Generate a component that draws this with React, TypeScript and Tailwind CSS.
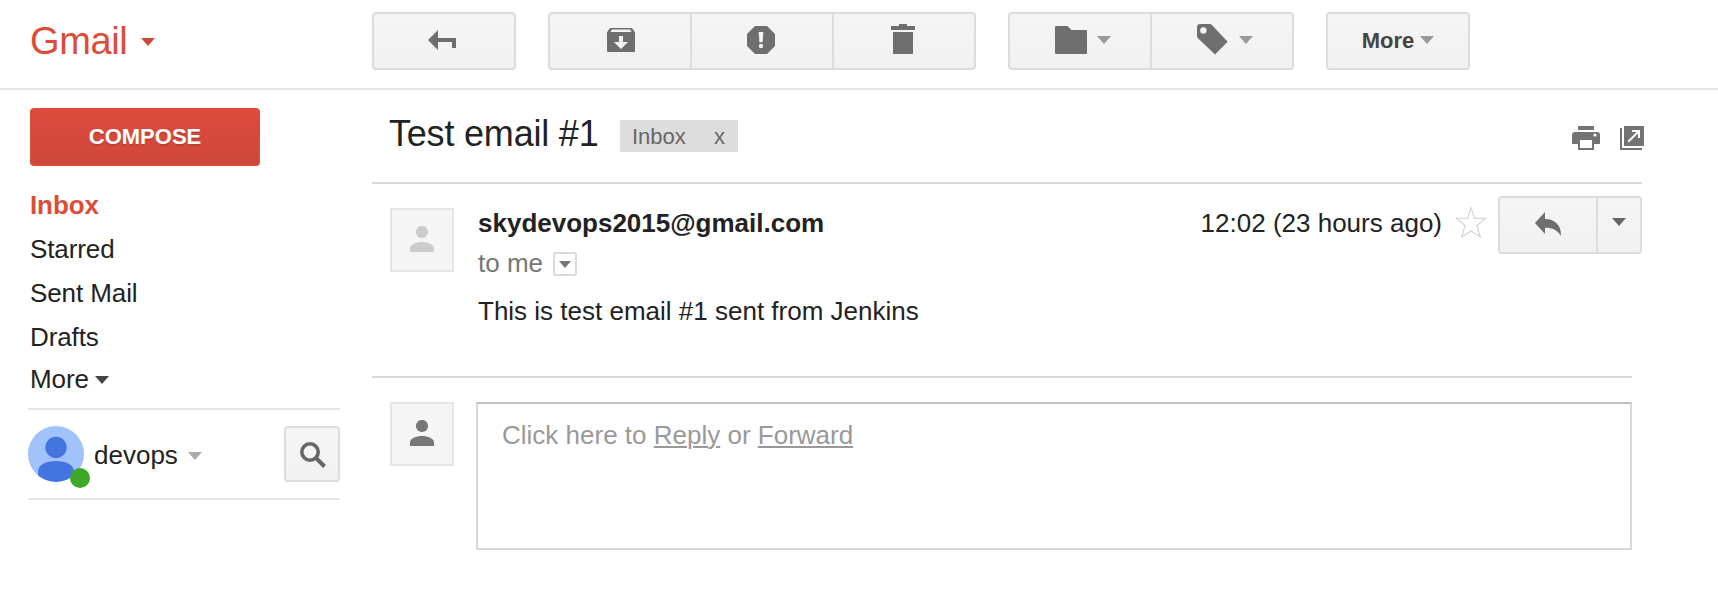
import type { ReactNode } from "react";

function Caret({ className = "" }: { className?: string }) {
  return (
    <svg width="14" height="8" viewBox="0 0 14 8" className={`shrink-0 ${className}`}>
      <path d="M0 0H14L7 8Z" fill="currentColor" />
    </svg>
  );
}

function BackIcon() {
  return (
    <svg width="28" height="20" viewBox="0 0 28 20" className="-mt-0.5 mr-1">
      <path d="M10 0V8H28V18H24V12H10V20L0 10Z" fill="currentColor" />
    </svg>
  );
}

function ArchiveIcon() {
  return (
    <svg width="28" height="24" viewBox="0 0 28 24" className="-mt-0.5 ml-0.5">
      <path
        fillRule="evenodd"
        fill="currentColor"
        d="M4 0H24Q25 0 25.6 .8L28 4.2V23Q28 24 27 24H1Q0 24 0 23V4.2L2.4 .8Q3 0 4 0ZM5 1.6L3.4 4H24.6L23 1.6ZM12 8V14H7L14 21L21 14H16V8Z"
      />
    </svg>
  );
}

function SpamIcon() {
  return (
    <svg width="28" height="28" viewBox="0 0 28 28" className="-mt-0.5 mr-0.5">
      <path d="M8 0H20L28 8V20L20 28H8L0 20V8Z" fill="currentColor" />
      <path d="M11.7 6H16.3L15.6 16.3H12.4Z" fill="#f4f4f4" />
      <circle cx="14" cy="20" r="2.2" fill="#f4f4f4" />
    </svg>
  );
}

function TrashIcon() {
  return (
    <svg width="24" height="30" viewBox="0 0 24 30" className="-mt-1 mr-0.5">
      <path d="M8 0H16V2H24V6H0V2H8ZM2 8H22V30H2Z" fill="currentColor" />
    </svg>
  );
}

function FolderIcon() {
  return (
    <svg width="32" height="28" viewBox="0 0 32 28" className="-mt-0.5">
      <path d="M1 0H12.5L16.5 4H31Q32 4 32 5V27Q32 28 31 28H1Q0 28 0 27V1Q0 0 1 0Z" fill="currentColor" />
    </svg>
  );
}

function TagIcon() {
  return (
    <svg width="31" height="31" viewBox="0 0 31 31" className="-mt-[3px]">
      <path
        fillRule="evenodd"
        fill="currentColor"
        d="M3 0H12.5Q14 0 15 1L30.6 17.8L18 30.6L1 14.3Q0 13.3 0 12V3Q0 0 3 0ZM6.4 3.3A3.2 3.2 0 1 0 6.4 9.7A3.2 3.2 0 1 0 6.4 3.3Z"
      />
    </svg>
  );
}

function PrintIcon() {
  return (
    <svg width="28" height="24" viewBox="0 0 28 24">
      <path
        fillRule="evenodd"
        fill="currentColor"
        d="M6 0H22V4H6ZM3 6H25Q28 6 28 9V18H22V24H6V18H0V9Q0 6 3 6ZM8 14V22H20V14ZM23 7.4A1.6 1.6 0 1 0 23 10.6A1.6 1.6 0 1 0 23 7.4Z"
      />
    </svg>
  );
}

function PopOutIcon() {
  return (
    <svg width="24" height="24" viewBox="0 0 24 24">
      <path d="M4 0H24V20H4ZM0 2H2V22H22V24H0Z" fill="currentColor" />
      <path d="M12 5H19V12M19 5L8.2 15.8" fill="none" stroke="#fff" strokeWidth="2" />
    </svg>
  );
}

function StarIcon() {
  return (
    <svg width="32" height="32" viewBox="0 0 32 32">
      <path
        d="M16 1.8L19.4 12.3H30.6L21.9 19.5L25.4 31L16 25L6.6 31L10.1 19.5L1.4 12.3H12.6Z"
        fill="none"
        stroke="#d0d0d0"
        strokeWidth="1.1"
      />
    </svg>
  );
}

function ReplyIcon() {
  return (
    <svg width="26" height="24" viewBox="0 0 26 24" className="-mt-0.5">
      <path d="M10 0V7C20 7 26.5 13.5 25.9 23.7C22 17.5 17 15.5 10 15.7V22L0 11Z" fill="currentColor" />
    </svg>
  );
}

function SearchIcon() {
  return (
    <svg width="26" height="26" viewBox="0 0 26 26" className="mt-0.5 ml-0.5">
      <circle cx="10" cy="10" r="8.2" fill="none" stroke="currentColor" strokeWidth="3.6" />
      <path d="M16.5 16.5L24.5 24.5" stroke="currentColor" strokeWidth="4" />
    </svg>
  );
}

function PersonTile({ className = "" }: { className?: string }) {
  return (
    <div
      className={`flex size-16 shrink-0 items-center justify-center border-2 border-[#e5e5e5] bg-[#f5f5f5] ${className}`}
    >
      <svg width="24" height="26" viewBox="0 0 24 26" className="-mt-0.5">
        <circle cx="12" cy="6" r="6.1" fill="currentColor" />
        <path d="M0 26V22.5C0 18.5 6 16 12 16S24 18.5 24 22.5V26Z" fill="currentColor" />
      </svg>
    </div>
  );
}

const face = "border-2 border-[#dcdcdc] bg-linear-to-b from-[#f5f5f5] to-[#f1f1f1]";

function ButtonGroup({ items }: { items: ReactNode[] }) {
  return (
    <div className={`flex h-[58px] divide-x-2 divide-[#dcdcdc] rounded ${face}`}>
      {items.map((item, i) => (
        <button key={i} className="box-content flex w-[140px] items-center justify-center text-[#6e6e6e]">
          {item}
        </button>
      ))}
    </div>
  );
}

function Header() {
  return (
    <header className="flex h-[90px] items-start border-b-2 border-[#e5e5e5]">
      <div className="flex w-[372px] items-center pl-[30px] text-[#dd4b39]">
        <span className="w-[111px] text-[38px] leading-[82px] tracking-[-0.4px]">Gmail</span>
        <Caret className="mt-0.5 text-[#d14836]" />
      </div>
      <div className="flex gap-8 pt-3">
        <ButtonGroup items={[<BackIcon />]} />
        <ButtonGroup items={[<ArchiveIcon />, <SpamIcon />, <TrashIcon />]} />
        <ButtonGroup
          items={[
            <span className="flex items-center gap-2.5 pl-1.5">
              <FolderIcon />
              <Caret className="-mt-0.5 text-[#999]" />
            </span>,
            <span className="flex items-center gap-[11px] pl-1.5">
              <TagIcon />
              <Caret className="-mt-0.5 text-[#999]" />
            </span>,
          ]}
        />
        <ButtonGroup
          items={[
            <span className="flex items-center gap-1.5 text-[22px] leading-[54px] font-bold text-[#444]">
              More
              <Caret className="-mt-0.5 text-[#999]" />
            </span>,
          ]}
        />
      </div>
    </header>
  );
}

function Sidebar() {
  return (
    <aside className="w-[372px] shrink-0 pt-[18px] text-[26px] text-[#222]">
      <button className="ml-[30px] block h-[58px] w-[230px] rounded border-2 border-[#d94b3a] border-t-[#dc4c3c] bg-linear-to-b from-[#dd4b3e] to-[#ce473a] pb-px text-[22px] leading-[54px] font-bold text-white [text-shadow:0_2px_rgba(0,0,0,0.12)]">
        COMPOSE
      </button>
      <nav className="mt-[17px] flex flex-col pl-[30px] leading-[44px] tracking-[-0.1px]">
        <a className="font-bold text-[#dd4b39]">Inbox</a>
        <a>Starred</a>
        <a>Sent Mail</a>
        <a>Drafts</a>
        <a className="flex items-center gap-1.5 leading-10">
          More
          <Caret className="mt-0.5 text-[#444]" />
        </a>
      </nav>
      <div className="mt-[9px] ml-7 flex h-[92px] w-[312px] items-center border-y-2 border-[#e5e5e5]">
        <div className="relative size-14">
          <svg width="56" height="56" viewBox="0 0 56 56">
            <clipPath id="avatar">
              <circle cx="28" cy="28" r="28" />
            </clipPath>
            <g clipPath="url(#avatar)">
              <rect width="56" height="56" fill="#a1c2fa" />
              <circle cx="28" cy="21.4" r="10.7" fill="#4374e0" />
              <path d="M10 56V46C10 38.5 18 35 28 35S46 38.5 46 46V56Z" fill="#4374e0" />
            </g>
          </svg>
          <span className="absolute top-[42px] left-[42px] size-5 rounded-full bg-[#3da828]" />
        </div>
        <span className="ml-2.5 w-[94px] pt-0.5 leading-[56px]">devops</span>
        <Caret className="mt-1 text-[#aaa]" />
        <button className={`ml-auto flex size-14 items-center justify-center rounded text-[#666] ${face}`}>
          <SearchIcon />
        </button>
      </div>
    </aside>
  );
}

function Conversation() {
  return (
    <main className="w-[1272px] text-[26px] text-[#222]">
      <div className="flex h-[92px] items-start pl-[17px]">
        <h1 className="w-[231px] text-[36px] leading-[87px] tracking-[-0.2px] whitespace-nowrap">Test email #1</h1>
        <div className="mt-[30px] flex h-8 w-[118px] justify-between bg-[#ddd] pr-[13px] pl-3 text-[22px] leading-[33px] text-[#666]">
          <span>Inbox</span>
          <span>x</span>
        </div>
        <div className="mt-9 ml-auto flex gap-5 text-[#737373]">
          <PrintIcon />
          <PopOutIcon />
        </div>
      </div>

      <section className="flex h-[194px] w-[1270px] items-start border-t-2 border-[#d9d9d9] pl-[18px]">
        <PersonTile className="mt-6 text-[#ccc]" />
        <div className="ml-6 flex flex-col">
          <span className="mt-[17px] leading-[44px] font-bold">skydevops2015@gmail.com</span>
          <div className="-mt-1 flex items-center leading-[44px] text-[#777]">
            to me
            <span className="mt-0.5 ml-2.5 flex size-6 items-center justify-center rounded-[3px] border-2 border-[#dadada]">
              <svg width="12" height="7" viewBox="0 0 12 7">
                <path d="M0 0H12L6 7Z" fill="#777" />
              </svg>
            </span>
          </div>
          <p className="mt-1 leading-[44px]">This is test email #1 sent from Jenkins</p>
        </div>
        <span className="mt-[17px] ml-auto leading-[44px]">12:02 (23 hours ago)</span>
        <div className="mt-[22px] mr-[11px] ml-[13px]">
          <StarIcon />
        </div>
        <div className={`mt-3 flex h-[58px] w-36 divide-x-2 divide-[#dcdcdc] rounded text-[#6e6e6e] ${face}`}>
          <button className="flex w-[98px] items-center justify-center">
            <ReplyIcon />
          </button>
          <button className="flex flex-1 items-center justify-center">
            <Caret className="-mt-1.5 text-[#666]" />
          </button>
        </div>
      </section>

      <section className="flex w-[1260px] items-start border-t-2 border-[#d9d9d9] pt-6 pl-[18px]">
        <PersonTile className="text-[#777]" />
        <div className="ml-[22px] h-[148px] flex-1 border-2 border-[#d9d9d9] border-t-[#c0c0c0] pt-[9px] pl-6 leading-[44px] text-[#999]">
          Click here to <a className="underline decoration-2 underline-offset-2">Reply</a> or{" "}
          <a className="underline decoration-2 underline-offset-2">Forward</a>
        </div>
      </section>
    </main>
  );
}

export default function App() {
  return (
    <div className="h-[590px] w-[1718px] overflow-hidden bg-white font-['Liberation_Sans',Arial,sans-serif]">
      <Header />
      <div className="flex">
        <Sidebar />
        <Conversation />
      </div>
    </div>
  );
}
